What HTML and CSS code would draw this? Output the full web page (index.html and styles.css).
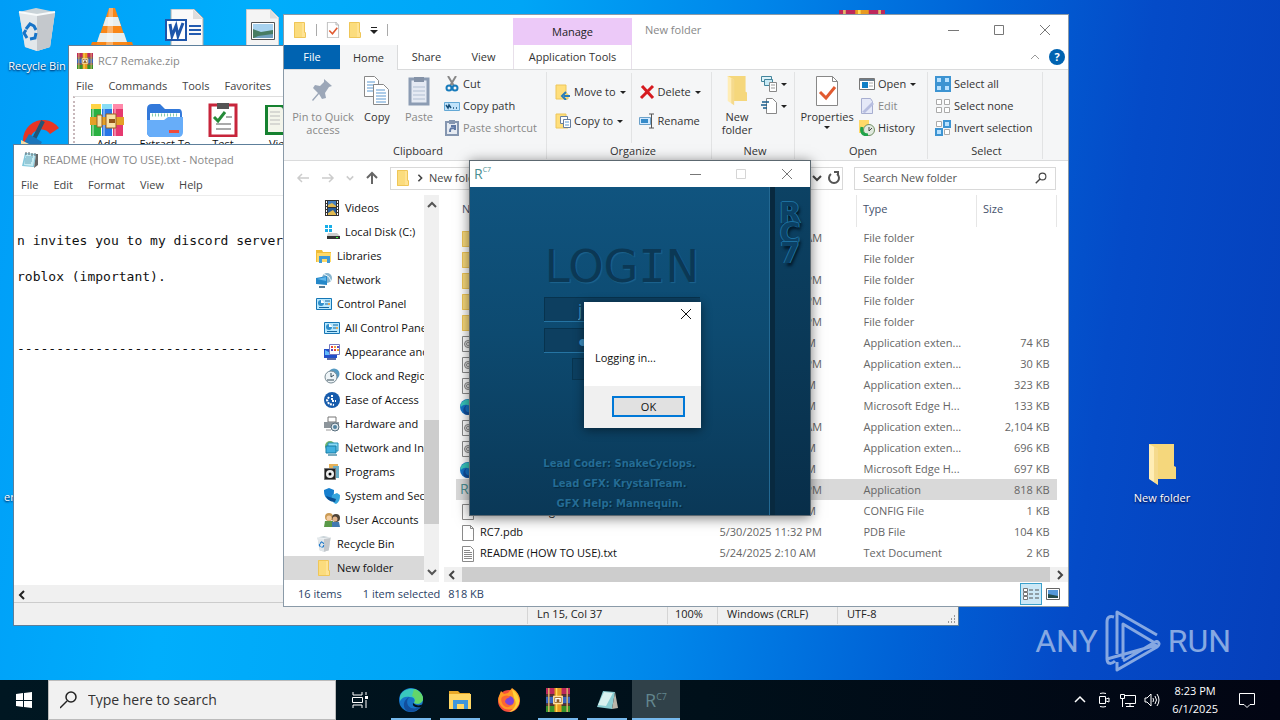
FILE: index.html
```html
<!DOCTYPE html>
<html lang="en">
<head>
<meta charset="utf-8">
<title>Desktop</title>
<link rel="stylesheet" href="styles.css">
</head>
<body>
<svg class="defs" aria-hidden="true">
  <symbol id="folder" viewBox="0 0 16 16"><path d="M2 0h10v3l1 1v12H2z" fill="#ffe394"/><path d="M2 0h8v16H2z" fill="#fbdc7d"/><path d="M2.5.5h10v10h1v5h-11z" fill="none" stroke="#efc658"/></symbol>
  <symbol id="bigfolder" viewBox="0 0 28 42"><path d="M1 0h25v22l2 1v12H8z" fill="#f5d77c"/><path d="M1 0l9 5v36l-9-6z" fill="#ffedb5"/><path d="M10 5v36l-4-3V3z" fill="#ecc765" opacity=".5"/></symbol>
  <symbol id="page" viewBox="0 0 16 16"><path d="M2.5.5h8l3 3v12h-11z" fill="#fff" stroke="#8a8a8a"/><path d="M10.500.5v3h3" fill="none" stroke="#8a8a8a"/></symbol>
  <symbol id="text" viewBox="0 0 16 16"><path d="M2.500.5h8l3 3v12h-11z" fill="#fff" stroke="#8a8a8a"/><path d="M4 4.500h6M4 6.500h8M4 8.500h8M4 10.500h8M4 12.500h8" stroke="#888"/></symbol>
  <symbol id="dll" viewBox="0 0 16 16"><path d="M2.500.5h8l3 3v12h-11z" fill="#fff" stroke="#8a8a8a"/><circle cx="8" cy="8" r="3.500" fill="#ddd" stroke="#888"/><circle cx="8" cy="8" r="1.500" fill="#fff" stroke="#888"/></symbol>
  <symbol id="edge" viewBox="0 0 24 24"><circle cx="12" cy="12" r="12" fill="#1674c8"/><path d="M1 8C5-2 22-2 24 10c0 5-5 7-9 5 2-3 0-6-4-6-4-1-8 0-10 4z" fill="#39c8bd"/><path d="M15 1c6 2 9 6 9 10 0 4-5 6-9 4 2-3 1-6-2-7z" fill="#63d66a"/><path d="M11 9c-4 2-4 9 1 11 4 1 7 0 10-2-3 5-9 7-14 5-5-3-4-12 3-14z" fill="#124f9e"/><path d="M14 15c3 3 7 3 10 1l-2 3c-4 1-9 0-8-4z" fill="#04101c"/></symbol>
  <symbol id="video" viewBox="0 0 16 16"><path d="M1 0h14v16H1z" fill="#333"/><path d="M4 1h8v6H4z" fill="#4480c0"/><path d="M4 8h8v7H4z" fill="#285c98"/><path d="M4 5l4-2 4 3v1H4zM4 13l5-3 3 4v1H4z" fill="#e2ba50"/><path d="M2.500 1v14M13.500 1v14" stroke="#fff" stroke-dasharray="2 1"/></symbol>
  <symbol id="disk" viewBox="0 0 16 16"><path d="M1 1h3v3H1zM5 1h3v3H5zM1 5h3v3H1zM5 5h3v3H5z" fill="#18aee8"/><path d="M4 9h9l3 3H3z" fill="#ccc"/><path d="M3 12h13v3H3z" fill="#333"/><path d="M12 13h2v1h-2z" fill="#4f4"/></symbol>
  <symbol id="library" viewBox="0 0 16 16"><path d="M0 2h6l1 2h8v10H0z" fill="#f0bd38"/><path d="M1 5h14v9H1z" fill="#ffd968"/><path d="M3 8h11v7h-3v-4H6v4H3z" fill="#3f9ad8"/></symbol>
  <symbol id="network" viewBox="0 0 16 16"><circle cx="11" cy="6" r="5" fill="#89b5ce"/><path d="M8 2l5 3 2 4" stroke="#e8f8ff" fill="none"/><path d="M0 6l11-2v9L0 12z" fill="#2588c9"/><path d="M1 7l9-2v4z" fill="#60b8ec"/><path d="M3 14h6v2H3z" fill="#537b96"/></symbol>
  <symbol id="panel" viewBox="0 0 16 16"><path d="M.5 2.500h15v11H.5z" fill="#b9e9ff" stroke="#1676b5"/><circle cx="5" cy="7" r="3" fill="#308fcb"/><path d="M5 7V4a3 3 0 0 1 3 3z" fill="#fff"/><path d="M9 5h5M9 8h3M3 11.500h10" stroke="#16669d"/><circle cx="13" cy="8" r="1" fill="#f48f20"/></symbol>
  <symbol id="appearance" viewBox="0 0 16 16"><path d="M0 5h13v9H0z" fill="#2350ca"/><path d="M1 6l9 5H1z" fill="#62bafa"/><path d="M5.500.5h10v10h-10z" fill="#fff" stroke="#7779bd"/><path d="M7 2h2v2H7zM10 5h2v2h-2z" fill="#e9413e"/><path d="M10 2h2v2h-2zM13 5h2v2h-2z" fill="#f3a330"/><path d="M13 2h2v2h-2zM7 5h2v2H7z" fill="#634bb9"/><path d="M3 15h9" stroke="#5e6ca5" stroke-width="2"/></symbol>
  <symbol id="clock" viewBox="0 0 16 16"><circle cx="10" cy="6" r="5.500" fill="#559ac2"/><circle cx="7" cy="9" r="6" fill="#eef4f7" stroke="#788a94"/><path d="M7 5v4l3-2M3 12h7" stroke="#334a57" fill="none"/></symbol>
  <symbol id="ease" viewBox="0 0 16 16"><circle cx="8" cy="8" r="8" fill="#175cac"/><path d="M8 3v6h4M5 5l-2 3 2 4 5 1" fill="none" stroke="#fff" stroke-width="2" stroke-dasharray="2 1"/></symbol>
  <symbol id="hardware" viewBox="0 0 16 16"><path d="M4 1h8v5H4z" fill="#fff" stroke="#777"/><path d="M0 6h15v6H0z" fill="#8d959b"/><circle cx="11" cy="11" r="4" fill="#dce4e9" stroke="#566d7c"/><circle cx="11" cy="11" r="2" fill="#5383a0"/><path d="M2 13h5v2H2z" fill="#ccc"/></symbol>
  <symbol id="internet" viewBox="0 0 16 16"><circle cx="6" cy="6" r="5" fill="#73b46c"/><path d="M4 3h10v8H4z" fill="#8bdaf5" stroke="#218eb7"/><path d="M2 6h10v7H2z" fill="#40b0df" stroke="#167ca5"/><path d="M4 15h9" stroke="#7cacbf" stroke-width="2"/></symbol>
  <symbol id="programs" viewBox="0 0 16 16"><path d="M5 0h9v13H5z" fill="#e6b25a"/><path d="M9 2h6v12H9z" fill="#6baec7"/><path d="M.5 4.500h11v11H.5z" fill="#222" stroke="#777"/><circle cx="6" cy="10" r="4" fill="#eee"/><circle cx="6" cy="10" r="1.500"/></symbol>
  <symbol id="security" viewBox="0 0 16 16"><path d="M0 2l5-2 5 2c0 6-1 8-5 10-4-2-5-5-5-10z" fill="#167fce"/><path d="M8 7l5-2 3 2c0 5-1 7-4 9-3-1-5-4-4-9z" fill="#35a5dd"/><path d="M2 8l10 3-1 3C6 14 3 11 2 8z" fill="#0a4f91"/></symbol>
  <symbol id="users" viewBox="0 0 16 16"><circle cx="5" cy="5" r="4" fill="#cb9b55"/><circle cx="12" cy="6" r="4" fill="#4f4438"/><path d="M1 9h8v6H0z" fill="#5a9948"/><path d="M8 10h7l1 5H8z" fill="#4279b0"/><circle cx="5" cy="6" r="2.500" fill="#f3cda2"/><circle cx="11" cy="7" r="2.500" fill="#e5b58c"/></symbol>
  <symbol id="bin" viewBox="0 0 38 44"><path d="M1 4l17-4 19 4-5 35-13 4-12-4z" fill="#c9d3d8"/><path d="M1 4l18 3 18-3-5 35-13 4-12-4z" fill="#e2e7ea"/><path d="M19 7v36l13-4 5-35z" fill="#b9bec2" opacity=".75"/><path d="M1 4l18 3 18-3" fill="none" stroke="#f8fbfc" stroke-width="2"/><path d="M8 21l4-5 4 2 2 4M18 25l-1 5-5 1M9 30l-3-5 2-3" fill="none" stroke="#1774c8" stroke-width="3"/></symbol>
  <symbol id="rar" viewBox="0 0 34 34"><path d="M0 0h34v9H0z" fill="#bd285c"/><path d="M0 12h34v10H0z" fill="#3865be"/><path d="M0 25h34v9H0z" fill="#35932b"/><path d="M0 9h34v3H0zM0 22h34v3H0z" fill="#5c3333"/><path d="M3 0h2v34H3zM29 0h2v34h-2z" fill="#e2b86b"/><path d="M12 0h10v34H12z" fill="#e79a21"/><path d="M14 0h2v34h-2z" fill="#ffdb54"/><path d="M11 12h12v10H11z" fill="#8d5b20" stroke="#ffe1a0" stroke-width="2"/><path d="M14 20v-5h6v5" stroke="#fff" fill="none" stroke-width="2"/></symbol>
  <symbol id="books" viewBox="0 0 34 34"><path d="M1 1h10v32H1z" fill="#2ab143"/><path d="M12 1h10v32H12z" fill="#2775e6"/><path d="M23 1h10v32H23z" fill="#e63a70"/><path d="M1 1h10v5H1z" fill="#ffd345"/><path d="M12 1h10v5H12z" fill="#88ddf5"/><path d="M23 1h10v5H23z" fill="#ff89aa"/><path d="M3 6v27M14 6v27M25 6v27" stroke="#ffffff60" stroke-width="2"/><path d="M0 14h34v8H0z" fill="#e4a127"/><path d="M7 12h5v12H7zM16 11h10v14H16z" fill="#f8e3a8" stroke="#9b6121"/><path d="M19 16h6v4h-6z" fill="#93561b"/></symbol>
  <symbol id="notepad" viewBox="0 0 16 16"><path d="M3 1l11 1-2 13-12-1z" fill="#83c8dc"/><path d="M4 2l9 1-2 11-9-1z" fill="#c8ecf3"/><path d="M14 2h2v11l-4 3z" fill="#666"/><path d="M4 5h7M3 7h7M3 9h7M3 11h6" stroke="#67a6ba"/><path d="M4 0v3M7 0v3M10 1v3M13 1v3" stroke="#59646b"/></symbol>
  <symbol id="check" viewBox="0 0 22 30"><path d="M.5.500h16l5 5v24H.5z" fill="#fff" stroke="#888"/><path d="M16.500.5v5h5" fill="none" stroke="#888"/><path d="M4 16l6 6 9-11" fill="none" stroke="#e15a30" stroke-width="3"/></symbol>
  <symbol id="close" viewBox="0 0 12 12"><path d="M1 1l10 10M11 1L1 11" stroke="currentColor"/></symbol>
  <symbol id="min" viewBox="0 0 12 12"><path d="M1 6.500h11" stroke="currentColor"/></symbol>
  <symbol id="max" viewBox="0 0 12 12"><path d="M1.500 1.500h9v9h-9z" fill="none" stroke="currentColor"/></symbol>
  <symbol id="left" viewBox="0 0 10 10"><path d="M7 1L3 5l4 4" fill="none" stroke="currentColor" stroke-width="2"/></symbol>
  <symbol id="right" viewBox="0 0 10 10"><path d="M3 1l4 4-4 4" fill="none" stroke="currentColor" stroke-width="2"/></symbol>
  <symbol id="up" viewBox="0 0 10 10"><path d="M1 7l4-4 4 4" fill="none" stroke="currentColor" stroke-width="2"/></symbol>
  <symbol id="down" viewBox="0 0 10 10"><path d="M1 3l4 4 4-4" fill="none" stroke="currentColor" stroke-width="2"/></symbol>
  <symbol id="caret" viewBox="0 0 8 8"><path d="M1 3h6L4 6z" fill="#222"/></symbol>
  <symbol id="lens" viewBox="0 0 16 16"><circle cx="10" cy="6" r="4.500" fill="none" stroke="currentColor" stroke-width="1.500"/><path d="M7 9l-6 6" stroke="currentColor" stroke-width="2"/></symbol>
</svg>

<main class="desktop">
  <section class="shortcut recycle"><svg class="i-bin"><use href="#bin"/></svg><span>Recycle Bin</span></section>
  <svg class="shortcut vlc" viewBox="0 0 48 48"><path d="M4 34h40l4 12H0z" fill="#f07d16"/><path d="M21 0h6l13 38H8z" fill="#f98718"/><path d="M18 9h12l3 9H15zM12 25h24l3 9H9z" fill="#e8eeee"/><path d="M21 0h4v38h-7z" fill="#fff" opacity=".35"/></svg>
  <svg class="shortcut word" viewBox="0 0 40 44"><path d="M6 0h23l9 9v35H6z" fill="#fafafa" stroke="#aaa"/><path d="M28 0v10h10" fill="#ddd"/><path d="M24 17h12M24 21h12M24 25h12" stroke="#235bb0" stroke-width="2"/><path d="M1 11h20v20H1z" fill="#fff" stroke="#1d55aa" stroke-width="2"/><path d="M5 15l2 12 4-10 2 10 5-13" fill="none" stroke="#1d55aa" stroke-width="3"/></svg>
  <svg class="shortcut picture" viewBox="0 0 34 44"><path d="M.5.500h24l8 8v35H.5z" fill="#f4f4f4" stroke="#ccc"/><path d="M24 .5v9h8" fill="#ddd"/><path d="M5.500 13.500h23v17h-23z" fill="#fff" stroke="#555"/><path d="M7 15h20v14H7z" fill="#a7d2ef"/><path d="M7 20l8 3 12-2v8H7z" fill="#477c62"/><path d="M12 27l15-2v4H8z" fill="#71a1bf"/></svg>
  <svg class="shortcut ccleaner" viewBox="0 0 40 48"><path d="M38 12A20 20 0 1 0 38 36l-9-5a11 11 0 1 1 0-13z" fill="#e63524"/><path d="M22 5L12 25" stroke="#245575" stroke-width="4"/><path d="M8 18l13 8-8 14L0 32z" fill="#1b75bb"/><path d="M0 24l12 6v18H0z" fill="#f2dda7"/></svg>
  <span class="shortcut clipped-label">er</span>
  <svg class="shortcut archive"><use href="#rar"/></svg>
  <section class="shortcut new-folder"><svg class="i-folder"><use href="#bigfolder"/></svg><span>New folder</span></section>

  <div class="watermark"><span>ANY</span><svg viewBox="0 0 56 62"><path d="M9 7Q2 5 2 12v37c0 6 5 5 8 2M12 44V2l40 23M18 49V14l32 19M2 49l50-14M12 52v8l40-23c4-3 1-7-2-5L18 51" fill="none" stroke="currentColor" stroke-width="3" stroke-linejoin="round"/></svg><span>RUN</span></div>

  <section class="window winrar">
    <header class="caption"><svg class="i16"><use href="#rar"/></svg>RC7 Remake.zip</header>
    <nav class="menu"><button>File</button><button>Commands</button><button>Tools</button><button>Favorites</button></nav>
    <div class="rar-tools">
      <button><svg><use href="#books"/></svg>Add</button>
      <button><svg viewBox="0 0 36 34"><path d="M0 6q0-5 5-5h8l5 5h14q3 0 3 5v18q0 5-5 5H5q-5 0-5-5z" fill="#3379da"/><path d="M3 10h30v15H3z" fill="#fff"/><path d="M5 12h26" stroke="#8ca" stroke-dasharray="1 2" stroke-width="3"/><path d="M0 17h17l4-3h15v15q0 5-5 5H5q-5 0-5-5z" fill="#67adf9"/><path d="M22 27h10v3H22z" fill="#ef4a3b"/></svg>Extract To</button>
      <button><svg viewBox="0 0 30 34"><path d="M2 2h26v31H2z" fill="#fff" stroke="#c7253b" stroke-width="3"/><path d="M9 0h12v6H9z" fill="#555"/><path d="M6 14l4 4 7-9" fill="none" stroke="#258b38" stroke-width="3"/><path d="M18 14h6M8 21h15M8 26h15" stroke="#aaa" stroke-width="2"/></svg>Test</button>
      <button><svg viewBox="0 0 34 34"><path d="M1 2h32v30H1z" fill="#15812f"/><path d="M4 4h12q3 0 3 3v22H4zM20 7q0-3 3-3h9v25H20z" fill="#f4f5eb"/><path d="M6 9h10M6 13h10M6 17h10M6 21h10" stroke="#bbb"/></svg>View</button>
    </div>
  </section>

  <section class="window note">
    <header class="caption"><svg class="i16"><use href="#notepad"/></svg>README (HOW TO USE).txt - Notepad</header>
    <nav class="menu"><button>File</button><button>Edit</button><button>Format</button><button>View</button><button>Help</button></nav>
    <pre class="document">


n invites you to my discord server

roblox (important).



--------------------------------</pre>
    <div class="note-scroll"><svg class="i10"><use href="#left"/></svg></div>
    <footer class="note-status"><span></span><span>Ln 15, Col 37</span><span>100%</span><span>Windows (CRLF)</span><span>UTF-8</span><svg viewBox="0 0 10 10"><path d="M8 1h1M5 4h1M8 4h1M2 7h1M5 7h1M8 7h1" stroke="#999" stroke-width="2"/></svg></footer>
  </section>

  <section class="window explorer">
    <header class="ex-title">
      <div class="quick"><svg class="i16"><use href="#folder"/></svg><i></i><svg class="i16"><use href="#check"/></svg><svg class="i16"><use href="#folder"/></svg><svg class="i10" viewBox="0 0 10 10"><path d="M2 2.500h6" stroke="#222"/><path d="M1 5h8L5 9z" fill="#222"/></svg><i></i></div>
      <div class="manage">Manage</div><span class="ex-name">New folder</span>
      <div class="winbtns"><button aria-label="Minimize"><svg class="i12"><use href="#min"/></svg></button><button aria-label="Maximize"><svg class="i12"><use href="#max"/></svg></button><button aria-label="Close"><svg class="i12"><use href="#close"/></svg></button></div>
    </header>
    <nav class="tabs"><button class="file">File</button><button class="home">Home</button><button>Share</button><button>View</button><button class="app">Application Tools</button><span class="help"><svg class="i10" viewBox="0 0 10 10"><path d="M1 7l4-4 4 4" fill="none" stroke="#999"/></svg><button aria-label="Help">?</button></span></nav>

    <div class="ribbon">
      <section class="group clip"><div class="tools">
        <button class="large wide off"><svg viewBox="0 0 24 30"><path d="M13 3l8 7-3 1-4 6 1 5-4 1-3-5-6 7-1-1 6-7-5-5 2-3 5 1 4-4z" fill="#9ca7b8"/></svg>Pin to Quick access</button>
        <button class="large"><svg viewBox="0 0 26 30"><path d="M.5.5h10l4 4v16H.5z" fill="#fff" stroke="#888"/><path d="M3 6h8M3 9h8M3 12h8M3 15h8" stroke="#5d99d1"/><path d="M9.500 8.500h10l5 5v15h-15z" fill="#fff" stroke="#888"/><path d="M12 14h9M12 17h10M12 20h10M12 23h10M12 26h10" stroke="#5d99d1"/></svg>Copy</button>
        <button class="large off"><svg viewBox="0 0 24 30"><path d="M3 3h18v25H3z" fill="#e5eaf3" stroke="#8c9cb3" stroke-width="3"/><path d="M7 1h10v5H7z" fill="#8492a7"/><path d="M6 11h12M6 15h12M6 19h12M6 23h12" stroke="#b1bfd2"/></svg>Paste</button>
        <div class="stack">
          <button><svg class="i16" viewBox="0 0 16 16"><path d="M4 0l6 10M12 0L6 10" stroke="#888" stroke-width="2"/><circle cx="5" cy="12" r="2.500" fill="none" stroke="#187bbb" stroke-width="2"/><circle cx="11" cy="12" r="2.500" fill="none" stroke="#187bbb" stroke-width="2"/></svg>Cut</button>
          <button><svg class="i16" viewBox="0 0 16 16"><path d="M.5 4.500h15v8H.5z" fill="#c1e3fa" stroke="#63a8d5"/><path d="M2 7l2 3 1-3 2 3M9 10h1M12 10h1" fill="none" stroke="#174e78" stroke-width="1.500"/></svg>Copy path</button>
          <button class="off"><svg class="i16" viewBox="0 0 16 16"><path d="M2 2h12v13H2z" fill="#e6ebf2" stroke="#8596b0" stroke-width="2"/><path d="M5 0h6v4H5z" fill="#8596b0"/><path d="M6 12c0-4 1-4 4-4M7 6h4v4" fill="none" stroke="#6079a5" stroke-width="2"/></svg>Paste shortcut</button>
        </div></div><h2>Clipboard</h2></section>
      <section class="group organize"><div class="tools">
        <div class="stack loose"><button><svg class="i16" viewBox="0 0 16 16"><path d="M1 1h10v9h2v5H1z" fill="#ffdf7c" stroke="#edc65a"/><path d="M15 12H9M11 8l-4 4 4 4" fill="none" stroke="#287cba" stroke-width="2"/></svg>Move to<svg class="i8"><use href="#caret"/></svg></button><button><svg class="i16" viewBox="0 0 16 16"><path d="M1 1h10v9h2v5H1z" fill="#ffdf7c" stroke="#edc65a"/><path d="M5.500 3.500h7v7h-7z" fill="#fff" stroke="#667d9d"/><path d="M8.500 6.500h7v8h-7z" fill="#fff" stroke="#667d9d"/><path d="M10 9h4M10 12h4" stroke="#5a9bd2"/></svg>Copy to<svg class="i8"><use href="#caret"/></svg></button></div>
        <div class="stack loose split"><button><svg class="i16" viewBox="0 0 16 16"><path d="M3 2l11 12M14 2L2 14" stroke="#d61b20" stroke-width="3"/></svg>Delete<svg class="i8"><use href="#caret"/></svg></button><button><svg class="i16" viewBox="0 0 16 16"><path d="M.5 4.500h11v7H.5z" fill="#d4eaff" stroke="#6ca1c9"/><path d="M2 6h7v4H2z" fill="#368bc9"/><path d="M10 1h5M12.500 1v14M10 15h5" stroke="#555"/></svg>Rename</button></div>
      </div><h2>Organize</h2></section>
      <section class="group new"><div class="tools"><button class="large"><svg><use href="#bigfolder"/></svg>New folder</button><div class="stack icon-stack"><button aria-label="New item"><svg class="i16" viewBox="0 0 16 16"><path d="M.5.5h10v5H.5z" fill="#dff3fa" stroke="#43859c"/><path d="M3.500 3.500h8v6h-8z" fill="#c8eaf5" stroke="#43859c"/><path d="M8.500 6.500h7v9h-7z" fill="#fff" stroke="#888"/><path d="M10 9h4M10 12h4" stroke="#999"/></svg><svg class="i8"><use href="#caret"/></svg></button><button aria-label="Easy access"><svg class="i16" viewBox="0 0 16 16"><path d="M5.500.5h6l4 4v11h-10z" fill="#fff" stroke="#888"/><path d="M1 4h7M0 7h6M2 10h4" stroke="#195e8d" stroke-width="1.500"/></svg><svg class="i8"><use href="#caret"/></svg></button></div></div><h2>New</h2></section>
      <section class="group open"><div class="tools"><button class="large"><svg><use href="#check"/></svg>Properties<svg class="i8"><use href="#caret"/></svg></button><div class="stack"><button><svg class="i16" viewBox="0 0 16 16"><path d="M.5 2.500h15v11H.5z" fill="#fff" stroke="#777"/><path d="M1 3h14v2H1z" fill="#6b7c8b"/><path d="M3 6h6v6H3z" fill="#107fc6"/><path d="M10 7h4M10 10h4" stroke="#aaa"/></svg>Open<svg class="i8"><use href="#caret"/></svg></button><button class="off"><svg class="i16" viewBox="0 0 16 16"><path d="M2.500.5h9l2 3v12h-11z" fill="#e5e9f8" stroke="#a7aed0"/><path d="M3 14l10-10 2 2L6 15z" fill="#b7bee0"/></svg>Edit</button><button><svg class="i16" viewBox="0 0 16 16"><path d="M0 0h10v13H0z" fill="#ffd968"/><circle cx="10" cy="10" r="5.500" fill="#e1e9df" stroke="#719064"/><path d="M3 7q-2 8 6 8" fill="none" stroke="#20a34a" stroke-width="3"/><path d="M10 7v4l3-3" fill="none" stroke="#444"/></svg>History</button></div></div><h2>Open</h2></section>
      <section class="group select"><div class="tools"><div class="stack"><button><svg class="i16" viewBox="0 0 16 16"><path d="M1 1h6v6H1zM9 1h6v6H9zM1 9h6v6H1zM9 9h6v6H9z" fill="#b8e1ff" stroke="#3d94d2" stroke-width="2"/></svg>Select all</button><button><svg class="i16" viewBox="0 0 16 16"><path d="M1.500 1.500h5v5h-5zM9.500 1.500h5v5h-5zM1.500 9.500h5v5h-5zM9.500 9.500h5v5h-5z" fill="#fff" stroke="#aaa"/></svg>Select none</button><button><svg class="i16" viewBox="0 0 16 16"><path d="M1.500 1.500h5v5h-5zM9.500 9.500h5v5h-5z" fill="#fff" stroke="#aaa"/><path d="M9 1h6v6H9zM1 9h6v6H1z" fill="#b8e1ff" stroke="#3d94d2" stroke-width="2"/></svg>Invert selection</button></div></div><h2>Select</h2></section>
    </div>

    <div class="address">
      <svg class="i14 dim" viewBox="0 0 14 14"><path d="M13 7H2M6 3L2 7l4 4" fill="none" stroke="currentColor" stroke-width="1.500"/></svg><svg class="i14 dim" viewBox="0 0 14 14"><path d="M1 7h11M8 3l4 4-4 4" fill="none" stroke="currentColor" stroke-width="1.500"/></svg><svg class="i8 dim"><use href="#down"/></svg><svg class="i14" viewBox="0 0 14 14"><path d="M7 13V2M2 7l5-5 5 5" fill="none" stroke="#666" stroke-width="2"/></svg>
      <div class="path"><svg class="i16"><use href="#folder"/></svg><svg class="i8"><use href="#right"/></svg><span>New folder</span><b></b><svg class="i10"><use href="#down"/></svg><svg class="i14 reload" viewBox="0 0 14 14"><path d="M10 3a5 5 0 1 1-6 0M7 1h4v4" fill="none" stroke="#555" stroke-width="2"/></svg></div>
      <label class="find"><input type="text" placeholder="Search New folder" aria-label="Search New folder"><svg class="i12"><use href="#lens"/></svg></label>
    </div>

    <div class="ex-main">
      <ul class="tree">
        <li class="sub"><svg><use href="#video"/></svg>Videos</li><li class="sub"><svg><use href="#disk"/></svg>Local Disk (C:)</li><li><svg><use href="#library"/></svg>Libraries</li><li><svg><use href="#network"/></svg>Network</li><li><svg><use href="#panel"/></svg>Control Panel</li><li class="sub"><svg><use href="#panel"/></svg>All Control Panel Items</li><li class="sub"><svg><use href="#appearance"/></svg>Appearance and</li><li class="sub"><svg><use href="#clock"/></svg>Clock and Region</li><li class="sub"><svg><use href="#ease"/></svg>Ease of Access</li><li class="sub"><svg><use href="#hardware"/></svg>Hardware and</li><li class="sub"><svg><use href="#internet"/></svg>Network and Internet</li><li class="sub"><svg><use href="#programs"/></svg>Programs</li><li class="sub"><svg><use href="#security"/></svg>System and Security</li><li class="sub"><svg><use href="#users"/></svg>User Accounts</li><li><svg><use href="#bin"/></svg>Recycle Bin</li><li class="on"><svg><use href="#folder"/></svg>New folder</li>
      </ul>
      <div class="vscroll"><svg class="i10"><use href="#up"/></svg><i></i><svg class="i10"><use href="#down"/></svg></div>
      <div class="files">
        <table>
          <colgroup><col><col class="c-date"><col class="c-type"><col class="c-size"></colgroup>
          <thead><tr><th>Name</th><th></th><th>Type</th><th>Size</th></tr></thead>
          <tbody>
            <tr><td><svg><use href="#folder"/></svg></td><td>5/30/2025 10:46 AM</td><td>File folder</td><td></td></tr>
            <tr><td><svg><use href="#folder"/></svg></td><td></td><td>File folder</td><td></td></tr>
            <tr><td><svg><use href="#folder"/></svg></td><td>5/30/2025 11:32 PM</td><td>File folder</td><td></td></tr>
            <tr><td><svg><use href="#folder"/></svg></td><td>5/30/2025 11:32 PM</td><td>File folder</td><td></td></tr>
            <tr><td><svg><use href="#folder"/></svg></td><td>5/30/2025 11:32 PM</td><td>File folder</td><td></td></tr>
            <tr><td><svg><use href="#dll"/></svg></td><td>5/24/2025 2:10 AM</td><td>Application exten...</td><td>74 KB</td></tr>
            <tr><td><svg><use href="#dll"/></svg></td><td>5/30/2025 11:32 PM</td><td>Application exten...</td><td>30 KB</td></tr>
            <tr><td><svg><use href="#dll"/></svg></td><td>5/24/2025 2:10 AM</td><td>Application exten...</td><td>323 KB</td></tr>
            <tr><td><svg><use href="#edge"/></svg></td><td>5/24/2025 2:10 AM</td><td>Microsoft Edge H...</td><td>133 KB</td></tr>
            <tr><td><svg><use href="#dll"/></svg></td><td>5/30/2025 10:46 AM</td><td>Application exten...</td><td>2,104 KB</td></tr>
            <tr><td><svg><use href="#dll"/></svg></td><td>5/24/2025 2:10 AM</td><td>Application exten...</td><td>696 KB</td></tr>
            <tr><td><svg><use href="#edge"/></svg></td><td>5/24/2025 2:10 AM</td><td>Microsoft Edge H...</td><td>697 KB</td></tr>
            <tr class="on"><td><span class="rc">R<sup>C7</sup></span></td><td>5/30/2025 11:32 PM</td><td>Application</td><td>818 KB</td></tr>
            <tr><td><svg><use href="#page"/></svg>RC7.exe.config</td><td>5/24/2025 2:10 AM</td><td>CONFIG File</td><td>1 KB</td></tr>
            <tr><td><svg><use href="#page"/></svg>RC7.pdb</td><td>5/30/2025 11:32 PM</td><td>PDB File</td><td>104 KB</td></tr>
            <tr><td><svg><use href="#text"/></svg>README (HOW TO USE).txt</td><td>5/24/2025 2:10 AM</td><td>Text Document</td><td>2 KB</td></tr>
          </tbody>
        </table>
        <div class="hscroll"><svg class="i10"><use href="#left"/></svg><i></i><svg class="i10"><use href="#right"/></svg></div>
      </div>
    </div>
    <footer class="ex-status"><span>16 items</span><span>1 item selected</span><span>818 KB</span><button class="details" aria-label="Details"><svg class="i16" viewBox="0 0 16 16"><path d="M.5 2.500h4v3h-4zM.5 6.500h4v3h-4zM.5 10.500h4v3h-4z" fill="#fff" stroke="#777"/><path d="M6 4h4M12 4h4M6 8h4M12 8h4M6 12h4M12 12h4" stroke="#555"/></svg></button><button aria-label="Large icons"><svg viewBox="0 0 14 12"><path d="M.5.5h13v11H.5z" fill="#fff" stroke="#666"/><path d="M2 2h10v8H2z" fill="#5597d8"/><path d="M2 6l10 2v2H2z" fill="#244a49"/></svg></button></footer>
  </section>

  <section class="window login">
    <header><span class="rc">R<sup>C7</sup></span><div class="winbtns"><button aria-label="Minimize"><svg class="i12"><use href="#min"/></svg></button><button class="faint" aria-label="Maximize"><svg class="i12"><use href="#max"/></svg></button><button aria-label="Close"><svg class="i12"><use href="#close"/></svg></button></div></header>
    <div class="login-body">
      <div class="form"><div class="fields"><h1>LOG<span>I</span>N</h1><input type="text" value="j" aria-label="Username"><input type="text" value="●" aria-label="Password"><button aria-label="Login"></button></div><p>Lead Coder: SnakeCyclops.<br>Lead GFX: KrystalTeam.<br>GFX Help: Mannequin.</p></div>
      <aside><span>R</span><span>C</span><span>7</span></aside>
    </div>
  </section>

  <section class="dialog" role="dialog" aria-label="Logging in">
    <button class="x" aria-label="Close"><svg class="i12"><use href="#close"/></svg></button>
    <p>Logging in...</p>
    <footer><button>OK</button></footer>
  </section>
</main>

<footer class="taskbar">
  <button class="start" aria-label="Start"><svg viewBox="0 0 16 16"><path d="M0 2l7-1v7H0zM8 1l8-1v8H8zM0 9h7v6l-7-1zM8 9h8v7l-8-1z" fill="#fff"/></svg></button>
  <label class="search"><svg viewBox="0 0 18 18"><circle cx="11" cy="6" r="5" fill="none" stroke="#222" stroke-width="1.500"/><path d="M7 10l-7 7" stroke="#222" stroke-width="1.500"/></svg><input type="text" placeholder="Type here to search" aria-label="Type here to search"></label>
  <button class="task" aria-label="Task View"><svg class="i16" viewBox="0 0 16 16"><path d="M1 0v3h9V0M1 16v-3h9v3M.5 5.500h10v5H.5zM14 0v3M14 8v8" fill="none" stroke="#fff"/><path d="M13 4h3v3h-3z" fill="#fff"/></svg></button>
  <div class="apps">
  <button class="task run" aria-label="Edge"><svg><use href="#edge"/></svg></button>
  <button class="task run" aria-label="File Explorer"><svg viewBox="0 0 24 24"><path d="M1 3h9l2 2h10v16H1z" fill="#e8a928"/><path d="M1 6h22v15H1z" fill="#ffd765"/><path d="M5 12h15v9h-4v-5H9v5H5z" fill="#3f96dc"/></svg></button>
  <button class="task" aria-label="Firefox"><svg viewBox="0 0 24 24"><circle cx="12" cy="13" r="11" fill="#f44e3c"/><path d="M2 8l2-5 3 3 4-1 4-5q8 5 8 13l-4 7q-10 4-15-2-4-5-2-10z" fill="#ff9a24"/><path d="M15 1q8 6 7 15-4 8-10 8 10-6 5-14z" fill="#ffd43a"/><circle cx="12" cy="13" r="5" fill="#7e42d7"/><path d="M5 9q4-3 9 0-6 1-6 5 3 5 8 2-5 6-10 1-3-5-1-8z" fill="#fb6534"/></svg></button>
  <button class="task run" aria-label="WinRAR"><svg><use href="#rar"/></svg></button>
  <button class="task run" aria-label="Notepad"><svg viewBox="0 0 24 24"><path d="M8 3l12 1-3 17-15-2z" fill="#8acdd2"/><path d="M9 4l9 1-7 13-8-1z" fill="#d9f1ef"/><path d="M20 4l3 16-6 1z" fill="#bbb5a9"/></svg></button>
  <button class="task run current" aria-label="RC7"><span class="rc">R<sup>C7</sup></span></button>
  </div>
  <div class="tray">
    <svg viewBox="0 0 16 16"><path d="M3 10l5-5 5 5" fill="none" stroke="#fff" stroke-width="1.500"/></svg>
    <svg viewBox="0 0 16 16"><path d="M3.500 4.500h6v7h-6zM10 7l3-1v4l-3-1M4 1.500q3-1 6 0M4 14.500q3 1 6 0" fill="none" stroke="#fff"/></svg>
    <svg viewBox="0 0 16 16"><path d="M5 3.500h10.500v8H5M10 12v3M6 14.500h8M.5 2.500h4v4h-4zM2.500 7v8" fill="none" stroke="#fff"/></svg>
    <svg viewBox="0 0 16 16"><path d="M1 6h2l4-4v12l-4-4H1zM9 6q1 2 0 4M11 4q3 4 0 8M13 2q4 6 0 12" fill="none" stroke="#fff"/></svg>
    <time>8:23 PM<br>6/1/2025</time>
    <svg viewBox="0 0 16 16"><path d="M.5 1.500h15v11H11l-3 3-3-3H.5z" fill="none" stroke="#fff"/></svg>
  </div>
</footer>
</body>
</html>
```
FILE: styles.css
```css
* { box-sizing: border-box; }
:root { --ui: "Open Sans", "Noto Sans", sans-serif; }
body { margin: 0; height: 100vh; display: flex; flex-direction: column; overflow: hidden; font: 11px/16px var(--ui); color: #222; }
button, input { font: inherit; color: inherit; background: none; border: 0; padding: 0; margin: 0; }
input { outline: 0; min-width: 0; }
h1, h2, p, ul { margin: 0; padding: 0; font-weight: 400; }
svg { flex: none; }
.defs { position: absolute; width: 0; height: 0; }
.i8 { width: 8px; height: 8px; } .i10 { width: 10px; height: 10px; } .i12 { width: 12px; height: 12px; } .i14 { width: 14px; height: 14px; } .i16 { width: 16px; height: 16px; }

.desktop { position: relative; flex: 1; overflow: hidden; background: linear-gradient(98deg, #009df7 0, #00aefc 18%, #00a5f6 38%, #0086ea 55%, #0062d6 72%, #044bc8 84%, #053fbb 100%); }
.shortcut { position: absolute; color: #fff; text-shadow: 0 1px 2px #003; }
.recycle { left: 2px; top: 8px; display: flex; flex-direction: column; align-items: center; gap: 6px; width: 70px; white-space: nowrap; }
.i-bin { width: 38px; height: 44px; }
.vlc { left: 88px; top: 8px; width: 48px; height: 48px; }
.word { left: 165px; top: 9px; width: 40px; height: 44px; }
.picture { left: 246px; top: 9px; width: 34px; height: 44px; }
.ccleaner { left: 21px; top: 116px; width: 40px; height: 48px; }
.clipped-label { left: 4px; top: 489px; }
.archive { left: 839px; top: 10px; width: 46px; height: 46px; }
.new-folder { right: 78px; top: 444px; width: 80px; display: flex; flex-direction: column; align-items: center; gap: 4px; }
.i-folder { width: 28px; height: 42px; }
.watermark { position: absolute; right: 49px; top: 610px; display: flex; align-items: center; gap: 7px; color: #86a8e2; font: 32px/60px "Roboto", sans-serif; }
.watermark svg { width: 56px; height: 62px; }

.window { position: absolute; background: #fff; border: 1px solid #5d7f9b; display: flex; flex-direction: column; }
.caption { display: flex; align-items: center; gap: 5px; color: #888; }
.menu { display: flex; gap: 15px; color: #444; }
.winrar { left: 68px; top: 45px; width: 700px; height: 400px; }
.winrar .caption { height: 30px; padding-left: 8px; }
.winrar .menu { height: 20px; padding-left: 7px; }
.rar-tools { display: flex; margin-left: 4px; border-top: 1px solid #ddd; border-left: 2px dotted #c8b8bb; padding: 6px 0 0 3px; line-height: 14px; color: #111; }
.rar-tools button { width: 58px; display: flex; flex-direction: column; align-items: center; }
.rar-tools svg { width: 36px; height: 34px; }
.note { left: 13px; top: 144px; width: 946px; height: 482px; }
.note .caption { height: 29px; padding-left: 8px; }
.note .menu { height: 22px; padding-left: 7px; border-bottom: 1px solid #ececec; }
.document { flex: 1; margin: 0; padding: 0 3px; font: 13px/18px "DejaVu Sans Mono", monospace; color: #111; overflow: hidden; }
.note-scroll { height: 17px; background: #f0f0f0; padding: 3px; }
.note-status { height: 23px; display: grid; grid-template-columns: 1fr 140px 50px 120px 109px 12px; align-items: center; background: #f0f0f0; border-top: 1px solid #ccc; }
.note-status span { padding-left: 9px; border-left: 1px solid #d5d5d5; line-height: 20px; height: 20px; }
.note-status span:first-child { border: 0; }
.note-status span:nth-child(3) { padding-left: 7px; }
.note-status svg { width: 10px; height: 10px; align-self: end; }

.explorer { left: 283px; top: 14px; right: 211px; height: 593px; border-color: #8a9aa8; }
.ex-title { height: 30px; display: flex; }
.quick { width: 229px; display: flex; align-items: center; gap: 6px; padding-left: 8px; }
.quick i { width: 1px; height: 12px; background: #aaa; margin: 0 2px; }
.manage { width: 119px; margin-top: 3px; background: #ecc9f8; text-align: center; line-height: 28px; }
.ex-name { padding-left: 13px; line-height: 30px; color: #888; }
.winbtns { margin-left: auto; display: flex; color: #777; }
.winbtns button { width: 46px; display: grid; place-items: center; }
.tabs { height: 25px; display: flex; border-bottom: 1px solid #dadbdc; color: #333; }
.tabs button { width: 57px; }
.tabs .file { width: 56px; background: #0063b1; color: #fff; }
.tabs .home { width: 58px; background: #f5f6f7; border-right: 1px solid #dadbdc; margin-bottom: -1px; }
.tabs .app { width: 119px; margin-left: 1px; border: solid #e8e0ea; border-width: 0 1px; }
.help { margin-left: auto; display: flex; align-items: center; gap: 9px; padding-right: 3px; }
.tabs .help button { width: 16px; height: 16px; border-radius: 50%; background: #0063b1; color: #fff; font-weight: 700; }
.ribbon { height: 91px; display: flex; background: #f5f6f7; border-bottom: 1px solid #dadbdc; color: #333; }
.group { display: flex; flex-direction: column; border-right: 1px solid #e2e3e4; margin: 2px 0 1px; }
.group h2 { font-size: 11px; line-height: 16px; text-align: center; }
.tools { flex: 1; display: flex; padding-top: 1px; }
.clip { width: 263px; padding-left: 6px; } .organize { width: 165px; padding-left: 8px; } .new { width: 83px; padding-left: 4px; } .open { width: 133px; padding-left: 4px; } .select { width: 115px; padding-left: 3px; }
.off { color: #888; }
.large { width: 42px; display: flex; flex-direction: column; align-items: center; line-height: 13px; align-self: flex-start; }
.large.wide { width: 66px; }
.large > svg:first-child { width: 26px; height: 30px; margin: 3px 0 4px; }
.open .large { width: 56px; }
.stack { display: flex; flex-direction: column; padding-left: 4px; }
.stack button { height: 22px; display: flex; align-items: center; gap: 3px; white-space: nowrap; }
.stack.loose { padding: 4px 0 0; }
.stack.loose button { height: 29px; }
.stack.split { margin-left: 4px; padding-left: 7px; border-left: 1px solid #e2e3e4; }
.icon-stack { padding-left: 3px; }
.address { height: 34px; display: flex; align-items: center; gap: 11px; padding: 0 12px; color: #444; }
.dim { color: #ccc; }
.path { flex: 1; height: 23px; border: 1px solid #d9d9d9; display: flex; align-items: center; gap: 5px; padding: 0 1px 0 4px; }
.path b { flex: 1; }
.find { width: 202px; height: 23px; display: flex; align-items: center; border: 1px solid #d9d9d9; padding: 0 8px; }
.find input { flex: 1; } input::placeholder { color: #555; opacity: 1; }
.ex-main { flex: 1; min-height: 0; display: flex; }
.tree { width: 140px; list-style: none; color: #111; padding-top: 1px; overflow: hidden; }
.tree li { height: 24px; display: flex; align-items: center; gap: 5px; padding-left: 32px; white-space: nowrap; }
.tree .sub { padding-left: 40px; }
.tree svg { width: 16px; height: 16px; }
.on { background: #d9d9d9; }
.vscroll { width: 15px; background: #f0f0f0; display: flex; flex-direction: column; align-items: center; justify-content: space-between; padding: 5px 0; color: #555; }
.vscroll i { width: 15px; height: 104px; background: #cdcdcd; margin: auto 0 43px; }
.files { flex: 1; display: flex; flex-direction: column; padding-left: 5px; min-width: 0; }
table { width: calc(100% - 23px); margin-left: 12px; border-collapse: collapse; table-layout: fixed; color: #666; }
.c-date { width: 144px; } .c-type { width: 120px; } .c-size { width: 80px; }
th { height: 32px; padding: 0 6px 4px; font-weight: 400; text-align: left; color: #45526c; border-right: 1px solid #e6e6e6; }
th:first-child { border: 0; }
td { height: 21px; padding: 0 7px; line-height: 20px; white-space: nowrap; }
td:first-child { padding-left: 4px; color: #111; }
td:last-child { text-align: right; }
td svg { width: 16px; height: 16px; vertical-align: middle; margin-right: 4px; }
.hscroll { height: 15px; margin-top: auto; background: #f0f0f0; display: flex; align-items: center; gap: 5px; padding: 0 3px; color: #444; }
.hscroll i { flex: 1; height: 15px; background: #cdcdcd; }
.ex-status { height: 24px; display: flex; align-items: center; padding: 0 4px 0 14px; color: #2b3f66; }
.ex-status span + span { margin-left: 21px; } .ex-status span:nth-child(3) { margin-left: 8px; }
.ex-status button { width: 22px; height: 22px; display: grid; place-items: center; }
.ex-status button:last-child svg { width: 14px; height: 12px; }
.ex-status .details { margin-left: auto; background: #cce8f6; border: 1px solid #3ba1cc; }
.rc { color: #4a8e91; font-size: 14px; line-height: 16px; white-space: nowrap; }
.rc sup { font-size: 7px; line-height: 7px; vertical-align: 7px; }

.login { left: 469px; top: 160px; width: 342px; height: 356px; border-color: #5c6870; box-shadow: 0 2px 12px #0008; }
.login header { height: 26px; display: flex; padding: 5px 0 0 4px; }
.login .winbtns { height: 16px; }
.faint { opacity: .3; }
.login-body { flex: 1; display: flex; background: linear-gradient(#10547f, #0d4a70 45%, #0a3857); }
.form { flex: 1; display: flex; flex-direction: column; align-items: center; padding-top: 53px; border-right: 1px solid #236993; }
.fields { display: flex; flex-direction: column; align-items: center; padding-left: 5px; }
.form h1 { font: 45px/54px "DejaVu Sans", sans-serif; color: #0b3855; text-shadow: 1px 1px 1px #1d648f; margin-bottom: 2px; }
.form h1 span { font-family: "DejaVu Sans Mono", monospace; }
.form input { width: 156px; height: 24px; margin: 1px 0 6px; padding-left: 33px; background: #0d3f60; border: solid #07334e; border-width: 1px 0 0 1px; box-shadow: 0 1px #2574a3; color: #4192c4; font-size: 16px; }
.form button { width: 100px; height: 22px; background: #0c3f60; border: 1px solid #083550; }
.form p { margin-top: auto; padding-bottom: 1px; text-align: center; font: bold 10px/20px "DejaVu Sans", sans-serif; color: #246c95; text-shadow: 1px 1px 1px #06283e; }
.login aside { width: 40px; border-left: 5px solid #08293f; background: linear-gradient(#0c4264, #082e49); display: flex; flex-direction: column; align-items: center; padding: 17px 5px 0 0; font: bold 28px/20px "DejaVu Sans", sans-serif; color: #0b4165; text-shadow: 1px 0 #1d70a0, -1px 0 #1d70a0, 0 -1px #1d70a0, 2px 3px 3px #03192a; }
.dialog { position: absolute; left: 584px; top: 302px; width: 117px; height: 126px; background: #fff; display: flex; flex-direction: column; box-shadow: 0 2px 10px #0007; color: #111; }
.x { align-self: end; width: 30px; height: 24px; display: grid; place-items: center; }
.dialog p { padding: 24px 11px 0; }
.dialog footer { margin-top: auto; height: 42px; background: #f0f0f0; display: flex; justify-content: flex-end; padding: 10px 16px 11px; }
.dialog footer button { width: 73px; background: #e1e1e1; border: 2px solid #0078d7; }

.taskbar { height: 40px; display: flex; background: linear-gradient(90deg, #001722, #00101a 55%, #020513); color: #fff; }
.start { width: 48px; display: grid; place-items: center; } .start svg { width: 16px; height: 16px; }
.search { width: 288px; background: #f1f1f1; border: 1px solid #bbb; display: flex; align-items: center; gap: 10px; padding-left: 11px; color: #333; font-size: 14px; }
.search svg { width: 18px; height: 18px; } .search input { flex: 1; } .search input::placeholder { color: #333; }
.apps { display: flex; gap: 1px; padding-left: 3px; }
.task { width: 48px; padding: 0 4px; display: grid; place-items: center; }
.task svg:not(.i16) { width: 24px; height: 24px; }
.run { background: linear-gradient(#76b9ed, #76b9ed) center bottom / 40px 2px no-repeat; }
.current { background: linear-gradient(#76b9ed, #76b9ed) center bottom / 48px 2px no-repeat, #304149; }
.current .rc { font-size: 18px; color: #63868e; } .current sup { font-size: 9px; }
.tray { margin-left: auto; display: flex; align-items: center; gap: 8px; padding-right: 25px; }
.tray svg { width: 16px; height: 16px; }
.tray time { text-align: center; line-height: 18px; margin: 0 13px 0 4px; }
```
